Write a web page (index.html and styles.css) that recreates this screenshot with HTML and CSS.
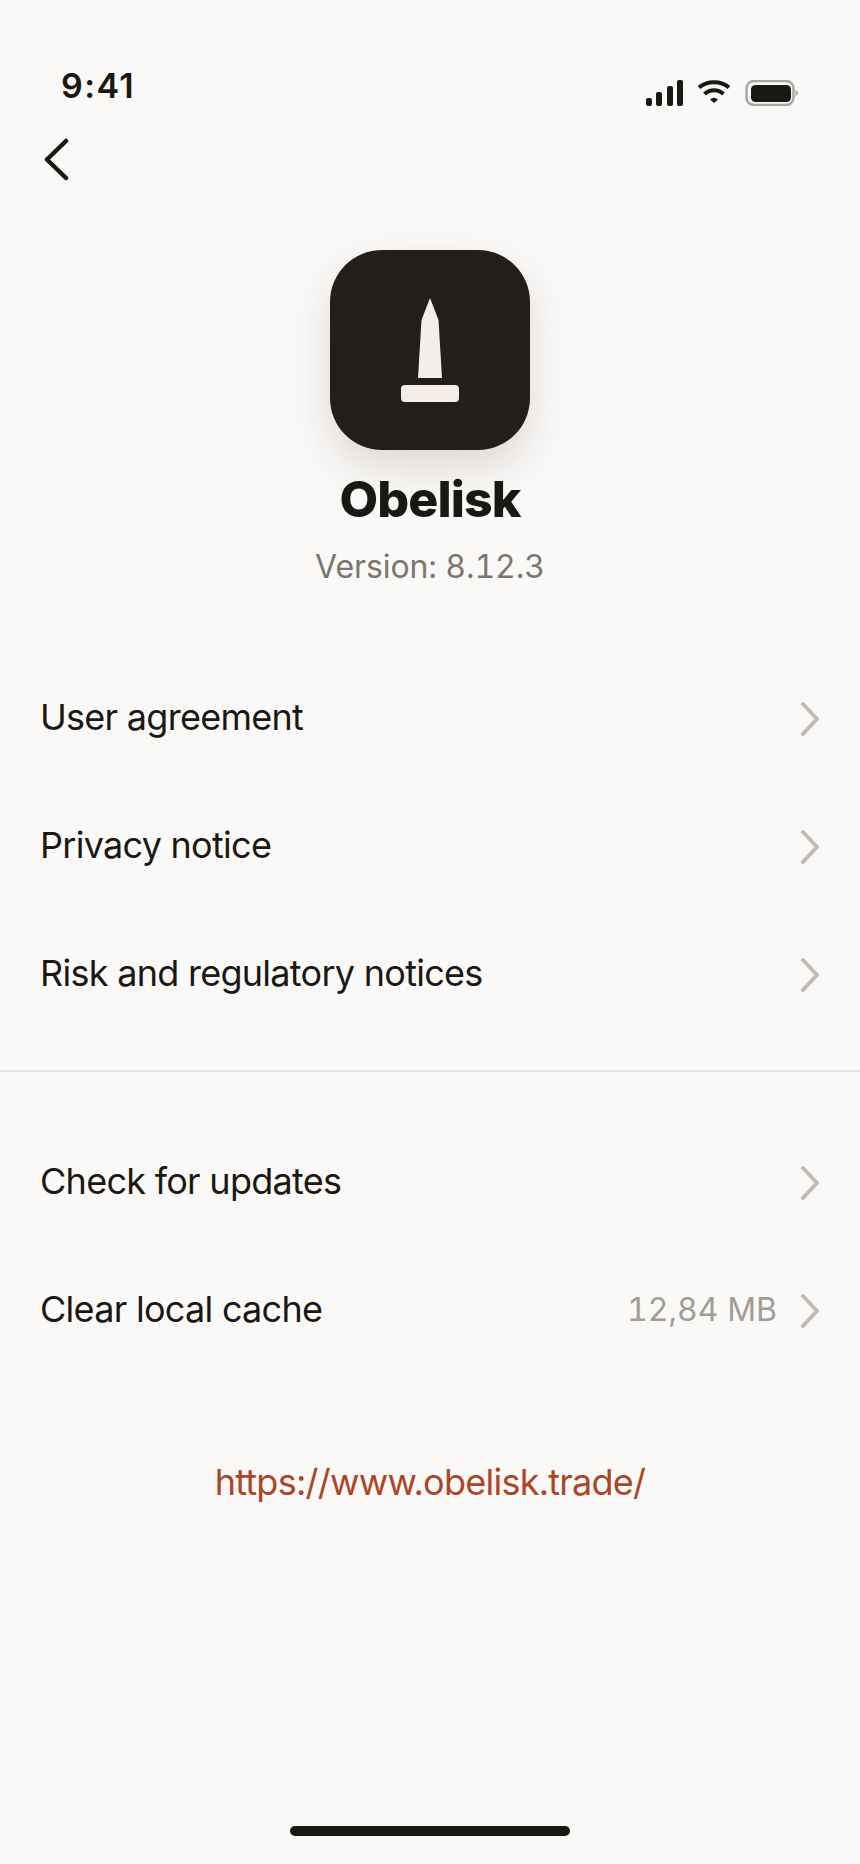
FILE: index.html
```html
<!DOCTYPE html>
<html lang="en">
<head>
<meta charset="utf-8">
<title>Obelisk</title>
<link rel="stylesheet" href="styles.css">
</head>
<body>
<main class="screen">
  <header class="status">
    <span class="time">9:41</span>
    <div class="status-icons">
      <svg class="signal" width="38" height="26" viewBox="0 0 38 26" fill="#1a1815"><rect x="1" y="18" width="6" height="8" rx="2"/><rect x="11" y="12" width="6" height="14" rx="2"/><rect x="22" y="6" width="6" height="20" rx="2"/><rect x="32" y="0" width="6" height="26" rx="2"/></svg>
      <svg class="wifi" width="36" height="24" viewBox="0 0 36 24" fill="none" stroke="#1a1815" stroke-width="4"><path d="M3 7.500C11 .5 25 .5 33 7.500"/><path d="M8.500 14C14 9 22 9 27.500 14"/><path d="M14 19.500Q18 16 22 19.500L18 23Z" fill="#1a1815" stroke="none"/></svg>
      <svg class="battery" width="54" height="26" viewBox="0 0 54 26"><rect x="1.500" y="1" width="47" height="24" rx="7.500" fill="none" stroke="#a9a7a3" stroke-width="2.500"/><rect x="6" y="5" width="40" height="17" rx="4.500" fill="#1a1815"/><path d="M50.500 9.500L53.500 13L50.500 16.500Z" fill="#a9a7a3"/></svg>
    </div>
  </header>

  <nav class="nav">
    <svg width="26" height="44" viewBox="0 0 26 44" fill="none" stroke="#1a1815" stroke-width="4.500" stroke-linecap="round" stroke-linejoin="round"><path d="M23 3L4 21.500L23 40"/></svg>
  </nav>

  <section class="about">
    <div class="logo">
      <svg width="200" height="200" viewBox="0 0 200 200" fill="#f5eee8"><path d="M100 48L108.500 70L112 128H88L91.500 70Z"/><rect x="71" y="135" width="58" height="17" rx="4"/></svg>
    </div>
    <h1 class="name">Obelisk</h1>
    <p class="version">Version: 8.12.3</p>
  </section>

  <ul class="group group-first">
    <li class="row"><span class="label">User agreement</span><svg class="chev" width="22" height="34" viewBox="0 0 22 34" fill="none" stroke="#c0bbb4" stroke-width="4" stroke-linecap="round" stroke-linejoin="round"><path d="M3 2L17 17L3 32"/></svg></li>
    <li class="row"><span class="label">Privacy notice</span><svg class="chev" width="22" height="34" viewBox="0 0 22 34" fill="none" stroke="#c0bbb4" stroke-width="4" stroke-linecap="round" stroke-linejoin="round"><path d="M3 2L17 17L3 32"/></svg></li>
    <li class="row"><span class="label">Risk and regulatory notices</span><svg class="chev" width="22" height="34" viewBox="0 0 22 34" fill="none" stroke="#c0bbb4" stroke-width="4" stroke-linecap="round" stroke-linejoin="round"><path d="M3 2L17 17L3 32"/></svg></li>
  </ul>

  <hr class="divider">

  <ul class="group">
    <li class="row"><span class="label">Check for updates</span><svg class="chev" width="22" height="34" viewBox="0 0 22 34" fill="none" stroke="#c0bbb4" stroke-width="4" stroke-linecap="round" stroke-linejoin="round"><path d="M3 2L17 17L3 32"/></svg></li>
    <li class="row"><span class="label">Clear local cache</span><span class="value">12,84 MB</span><svg class="chev" width="22" height="34" viewBox="0 0 22 34" fill="none" stroke="#c0bbb4" stroke-width="4" stroke-linecap="round" stroke-linejoin="round"><path d="M3 2L17 17L3 32"/></svg></li>
  </ul>

  <a class="link" href="#">https://www.obelisk.trade/</a>

  <div class="home-bar"></div>
</main>
</body>
</html>
```
FILE: styles.css
```css
* { box-sizing: border-box; }
html, body { margin: 0; padding: 0; }
body { background: #fbf9f7; color: #1a1815; font-family: Inter, "Liberation Sans", sans-serif; }
.screen { width: 860px; height: 1864px; display: flex; flex-direction: column; position: relative; overflow: hidden; }
.status { height: 66px; margin-top: 62px; padding: 0 61px; display: flex; justify-content: space-between; align-items: flex-start; }
.time { font-size: 34px; font-weight: 600; line-height: 48px; letter-spacing: 1.4px; }
.status-icons { display: flex; gap: 13px; align-items: flex-start; margin-top: 18px; }
.nav { height: 44px; padding-left: 43px; margin-top: 10px; }
.nav svg { display: block; }
.about { display: flex; flex-direction: column; align-items: center; margin-top: 68px; }
.logo { width: 200px; height: 200px; border-radius: 52px; background: #231e1a; box-shadow: 0 18px 40px rgba(35, 30, 26, .14); }
.logo svg { display: block; }
.name { margin: 19px 0 0; font-size: 50px; font-weight: 800; line-height: 60px; letter-spacing: -.9px; }
.version { margin: 18px 0 0; font-size: 32px; line-height: 40px; color: #7a7670; font-variant-numeric: tabular-nums; letter-spacing: -.1px; }
.group { list-style: none; margin: 0; padding: 0; }
.group-first { margin-top: 66px; }
.row { height: 128px; display: flex; align-items: center; padding: 0 38px 0 40px; }
.label { flex: 1; font-size: 36px; line-height: 44px; letter-spacing: -.72px; }
.value { font-size: 32px; color: #a09c96; margin-right: 23px; font-variant-numeric: tabular-nums; }
.chev { display: block; margin-top: 4px; }
.divider { border: 0; height: 2px; background: #e5e2de; margin: 33px 0 45px; }
.link { margin-top: 87px; text-align: center; font-size: 36px; line-height: 44px; letter-spacing: -.75px; color: #a8472a; text-decoration: none; }
.home-bar { position: absolute; left: 290px; top: 1826px; width: 280px; height: 10px; border-radius: 5px; background: #1a1815; }
```
